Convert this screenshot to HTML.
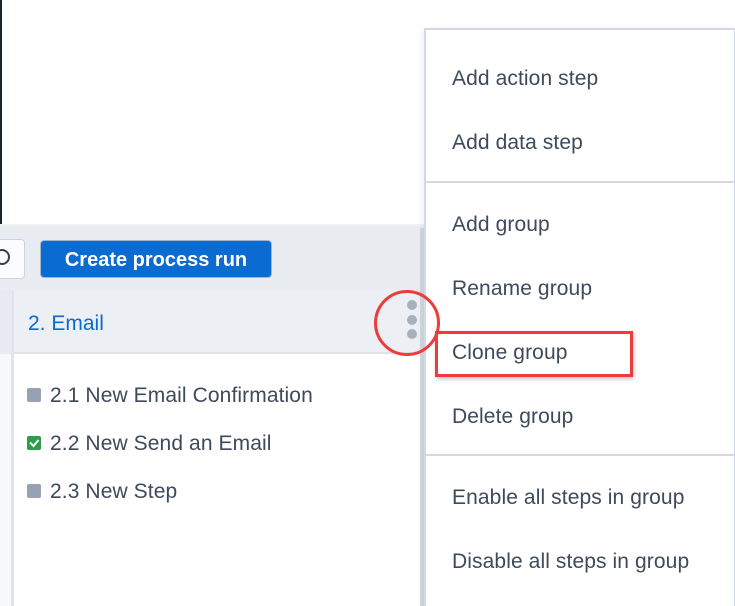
<!DOCTYPE html>
<html><head><style>
html,body{margin:0;width:735px;height:606px;overflow:hidden}
body{position:relative;background:#fff;font-family:"Liberation Sans",sans-serif;color:#3d4a5c}
div{position:absolute;box-sizing:border-box}
.mi{left:452px;font-size:21px;line-height:24px;color:#3d4a5c;white-space:nowrap;letter-spacing:0.1px}
.st{font-size:21px;line-height:24px;color:#3d4a5c;white-space:nowrap;letter-spacing:0.1px}
.sq{left:27px;width:14px;height:14px;border-radius:2px;background:#96a2b1}
</style></head><body>
<div style="left:0;top:0;width:2px;height:226px;background:#1e2330"></div>
<div style="left:0;top:224px;width:425px;height:4px;background:linear-gradient(#f3f4f6,#e4e8ee)"></div>
<div style="left:0;top:228px;width:425px;height:62px;background:#e9edf1"></div>
<div style="left:-20px;top:239px;width:45px;height:40px;background:#fbfcfd;border:1px solid #cdd4de;border-radius:4px"></div>
<div style="left:-6px;top:249px;width:16px;height:16px;border:2px solid #3a3f4a;border-radius:50%"></div>
<div style="left:40px;top:240px;width:232px;height:38px;background:#0a6bd0;border:1px solid #9fb6d6;border-radius:4px;color:#fff;font-weight:bold;font-size:20px;line-height:38px;text-align:center">Create process run</div>
<div style="left:0;top:290px;width:425px;height:64px;background:#eceff3;border-bottom:2px solid #dde2e9"></div>
<div style="left:0;top:290px;width:14px;height:316px;border-right:3px solid #dfe3ea;background:#f7f8fa"></div>
<div style="left:0;top:290px;width:12px;height:64px;background:#e7ebf0"></div>
<div style="left:420px;top:228px;width:5px;height:378px;background:#d2d8e1"></div>
<div style="left:28px;top:312px;font-size:21px;line-height:24px;color:#0a6bd0">2. Email</div>
<div class="sq" style="top:388px"></div><div class="st" style="left:50px;top:384px">2.1 New Email Confirmation</div>
<div class="sq" style="top:436px;background:#2c9e4b"><svg width="14" height="14" style="position:absolute;left:0;top:0"><path d="M3 6.5l3.5 3.5 5-6" stroke="#fff" stroke-width="2" fill="none"/></svg></div><div class="st" style="left:50px;top:432px">2.2 New Send an Email</div>
<div class="sq" style="top:484px"></div><div class="st" style="left:50px;top:480px">2.3 New Step</div>
<div style="left:424px;top:28px;width:311px;height:600px;background:#fff;border:2px solid #d3d9e3;border-right:1px solid #d3d9e3;box-shadow:-2px 2px 6px rgba(0,0,0,0.06)"></div>
<div style="left:426px;top:181px;width:309px;height:2px;background:#d3d8e1"></div>
<div style="left:426px;top:454px;width:309px;height:2px;background:#d3d8e1"></div>
<div class="mi" style="top:67px">Add action step</div>
<div class="mi" style="top:131px">Add data step</div>
<div class="mi" style="top:213px">Add group</div>
<div class="mi" style="top:277px">Rename group</div>
<div class="mi" style="top:341px">Clone group</div>
<div class="mi" style="top:405px">Delete group</div>
<div class="mi" style="top:486px">Enable all steps in group</div>
<div class="mi" style="top:550px">Disable all steps in group</div>
<div style="left:435px;top:331px;width:198px;height:46px;border:3px solid #ee3b3b;box-shadow:1px 2px 4px rgba(0,0,0,0.25)"></div>
<div style="left:374px;top:290px;width:66px;height:66px;border:3px solid #ee3b3b;border-radius:50%;background:rgba(236,239,243,0.0)"></div>
<div style="left:407px;top:300px;width:10px;height:10px;border-radius:50%;background:#a7b0bc"></div>
<div style="left:407px;top:315px;width:10px;height:10px;border-radius:50%;background:#a7b0bc"></div>
<div style="left:407px;top:329px;width:10px;height:10px;border-radius:50%;background:#a7b0bc"></div>
</body></html>
